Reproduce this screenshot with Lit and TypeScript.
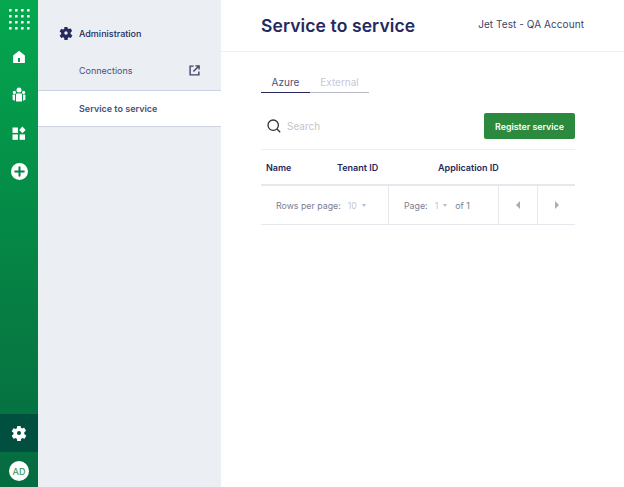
import { LitElement, css, html, svg } from "lit";
import { customElement } from "lit/decorators.js";

const gearPath =
    "M19.4 13.2c.05-.4.08-.8.08-1.2s-.03-.8-.08-1.2l2.3-1.8a.6.6 0 0 0 .14-.76l-2.2-3.8a.6.6 0 0 0-.72-.26l-2.7 1.1a8 8 0 0 0-1.9-1.1l-.42-2.86A.56.56 0 0 0 13.7 1.6H9.3a.56.56 0 0 0-.56.48l-.4 2.86a8 8 0 0 0-1.9 1.1l-2.72-1.1a.56.56 0 0 0-.7.26l-2.2 3.8a.56.56 0 0 0 .14.76l2.3 1.8a9 9 0 0 0 0 2.4l-2.3 1.8a.6.6 0 0 0-.14.76l2.2 3.8c.14.24.44.34.7.26l2.72-1.1c.58.44 1.22.82 1.9 1.1l.4 2.86c.06.28.28.48.56.48h4.4c.28 0 .5-.2.56-.48l.42-2.86c.68-.28 1.3-.66 1.9-1.1l2.7 1.1c.26.08.58 0 .72-.26l2.2-3.8a.6.6 0 0 0-.14-.76l-2.3-1.8zM11.5 15a3 3 0 1 1 0-6 3 3 0 0 1 0 6z";

const gear = (size: number, fill: string) => html`
    <svg width=${size} height=${size} viewBox="-0.5 0 24 24">
        <path fill=${fill} fill-rule="evenodd" d=${gearPath}></path>
    </svg>
`;

const gridDots = () => {
    const dots = [];
    for (let row = 0; row < 4; row++) {
        for (let col = 0; col < 4; col++) {
            dots.push(svg`<rect x=${col * 6} y=${row * 6} width="2.6" height="2.6" rx="0.6" fill="#fff"></rect>`);
        }
    }
    return html`<svg width="21" height="21" viewBox="0 0 21 21">${dots}</svg>`;
};

@customElement("app-root")
export class AppRoot extends LitElement {
    static override styles = css`
        :host {
            display: flex;
            width: 624px;
            height: 487px;
            overflow: hidden;
            background: #fff;
            font-family: Inter, "Liberation Sans", sans-serif;
            color: #26295e;
        }

        .rail {
            width: 38px;
            flex: none;
            display: flex;
            flex-direction: column;
            align-items: center;
            background: linear-gradient(180deg, #05a84f 0%, #049048 35%, #067a42 70%, #056b41 100%);
        }

        .rail-top {
            flex: 1;
            display: flex;
            flex-direction: column;
            align-items: center;
            padding-top: 10px;
        }

        .rail-icon {
            width: 38px;
            height: 38px;
            display: flex;
            align-items: center;
            justify-content: center;
        }

        .rail-icon.first {
            height: 18px;
            margin-bottom: 10px;
        }

        .rail-settings {
            width: 38px;
            height: 38px;
            display: flex;
            align-items: center;
            justify-content: center;
            background: #014f3e;
        }

        .rail-avatar {
            height: 35px;
            box-sizing: border-box;
            padding-top: 3px;
            display: flex;
            align-items: center;
            justify-content: center;
        }

        .avatar {
            width: 20px;
            height: 20px;
            border-radius: 50%;
            background: #fff;
            color: #3f9a5c;
            font-size: 9px;
            font-weight: 500;
            display: flex;
            align-items: center;
            justify-content: center;
        }

        .side {
            width: 183px;
            flex: none;
            background: #ebeef2;
            padding-top: 14px;
            box-sizing: border-box;
        }

        .side-head {
            height: 38px;
            display: flex;
            align-items: center;
            gap: 6px;
            padding-left: 21px;
            font-size: 9px;
            font-weight: 500;
        }

        .side-link {
            height: 38px;
            box-sizing: border-box;
            padding: 0 21px 2px 41px;
            display: flex;
            align-items: center;
            justify-content: space-between;
            font-size: 9px;
            color: #4c4f78;
        }

        .side-active {
            height: 37px;
            box-sizing: border-box;
            display: flex;
            align-items: center;
            padding-left: 41px;
            background: #fff;
            border-top: 1px solid #cdd3e2;
            border-bottom: 1px solid #cdd3e2;
            font-size: 9px;
            font-weight: 600;
            color: #4c4f78;
        }

        .main {
            flex: 1;
            min-width: 0;
        }

        .header {
            height: 52px;
            box-sizing: border-box;
            display: flex;
            align-items: center;
            justify-content: space-between;
            padding: 0 40px;
            border-bottom: 1px solid #eeeff2;
        }

        .title {
            font-size: 17.5px;
            font-weight: 600;
            letter-spacing: 0.1px;
        }

        .account {
            padding-bottom: 4px;
            font-size: 10px;
            letter-spacing: 0.07px;
            color: #3f4268;
        }

        .content {
            width: 314px;
            margin-left: 40px;
            padding-top: 21px;
        }

        .tabs {
            display: flex;
            width: 108px;
        }

        .tab {
            height: 20px;
            box-sizing: border-box;
            font-size: 10px;
            text-align: center;
            border-bottom: 1px solid #b8bac6;
            color: #c6c9d9;
            line-height: 18px;
        }

        .tab.azure {
            width: 49px;
            color: #4c4f78;
            border-bottom: 1px solid #26295e;
        }

        .tab.external {
            width: 59px;
        }

        .toolbar {
            margin-top: 20px;
            padding-bottom: 10px;
            display: flex;
            align-items: center;
            justify-content: space-between;
            border-bottom: 1px solid #eeeff2;
        }

        .search {
            display: flex;
            align-items: center;
            gap: 6px;
            padding-left: 6px;
            font-size: 10px;
            color: #c4c5ca;
        }

        .register {
            width: 91px;
            height: 26px;
            display: flex;
            align-items: center;
            justify-content: center;
            background: #2b8a3e;
            border-radius: 2px;
            color: #fff;
            font-size: 8.8px;
            font-weight: 600;
        }

        .thead {
            height: 36px;
            box-sizing: border-box;
            display: grid;
            grid-template-columns: 71px 101px 1fr;
            align-items: center;
            padding-left: 5px;
            font-size: 9px;
            font-weight: 600;
            border-bottom: 2px solid #e6e8ee;
        }

        .pager {
            height: 39px;
            box-sizing: border-box;
            display: grid;
            grid-template-columns: 128px 110px 39px 1fr;
            border-bottom: 1px solid #e6e8ee;
            font-size: 8.8px;
            color: #7b7d92;
        }

        .cell {
            display: flex;
            align-items: center;
            border-right: 1px solid #e6e8ee;
        }

        .cell:last-child {
            border-right: none;
        }

        .rows {
            padding-left: 15px;
        }

        .pages {
            padding-left: 15px;
        }

        .arrow {
            justify-content: center;
        }

        .val {
            color: #c4c6d2;
            margin-left: 7px;
        }

        .caret {
            width: 0;
            height: 0;
            border-left: 2px solid transparent;
            border-right: 2px solid transparent;
            border-top: 3px solid #b9bbc8;
            margin-left: 5px;
        }

        .of {
            margin-left: 8px;
        }

        .tri-left {
            width: 0;
            height: 0;
            border-top: 4px solid transparent;
            border-bottom: 4px solid transparent;
            border-right: 4px solid #a9abb8;
        }

        .tri-right {
            width: 0;
            height: 0;
            border-top: 4px solid transparent;
            border-bottom: 4px solid transparent;
            border-left: 4px solid #a9abb8;
        }
    `;

    override render() {
        return html`
            <div class="rail">
                <div class="rail-top">
                    <div class="rail-icon first">${gridDots()}</div>
                    <div class="rail-icon">
                        <svg width="14" height="14" viewBox="0 0 14 14">
                            <path
                                fill="#fff"
                                fill-rule="evenodd"
                                d="M7 .8 1.4 5.2c-.2.15-.3.4-.3.6V12.4c0 .4.3.6.6.6h10.6c.3 0 .6-.2.6-.6V5.8c0-.2-.1-.45-.3-.6L7 .8zM6 12V8.2c0-.2.1-.3.3-.3h1.4c.2 0 .3.1.3.3V12H6z"
                            ></path>
                        </svg>
                    </div>
                    <div class="rail-icon">
                        <svg width="16" height="16" viewBox="0 0 16 16" fill="#fff">
                            <circle cx="8" cy="3" r="2.5"></circle>
                            <circle cx="3.4" cy="5.4" r="1.6"></circle>
                            <circle cx="12.6" cy="5.4" r="1.6"></circle>
                            <path d="M5 7.6c0-.6.5-1.1 1.1-1.1h3.8c.6 0 1.1.5 1.1 1.1V14.5H5V7.6z"></path>
                            <path d="M1.6 8.2c0-.4.3-.8.8-.8h1.6v6.4L1.6 12.8V8.2z"></path>
                            <path d="M14.4 8.2c0-.4-.3-.8-.8-.8H12v6.4l2.4-1V8.2z"></path>
                        </svg>
                    </div>
                    <div class="rail-icon">
                        <svg width="14" height="14" viewBox="0 0 14 14" fill="#fff">
                            <rect x="0.5" y="1.5" width="5.4" height="5.4"></rect>
                            <rect x="0.5" y="8.4" width="5.4" height="5.4"></rect>
                            <rect x="7.6" y="8.4" width="5.4" height="5.4"></rect>
                            <path d="M10.4 0.6 13.6 3.9 10.4 7.2 7.2 3.9z"></path>
                        </svg>
                    </div>
                    <div class="rail-icon">
                        <svg width="17" height="17" viewBox="0 0 17 17">
                            <circle cx="8.5" cy="8.5" r="8.5" fill="#fff"></circle>
                            <path d="M8.5 4.2v8.6M4.2 8.5h8.6" stroke="#067f45" stroke-width="2" stroke-linecap="round"></path>
                        </svg>
                    </div>
                </div>
                <div class="rail-settings">${gear(16, "#fff")}</div>
                <div class="rail-avatar"><div class="avatar">AD</div></div>
            </div>

            <div class="side">
                <div class="side-head">${gear(14, "#26295e")}<span>Administration</span></div>
                <div class="side-link">
                    <span>Connections</span>
                    <svg width="11" height="11" viewBox="0 0 12 12" fill="none" stroke="#3f4268" stroke-width="1.5">
                        <path d="M5 1.2H1.2v9.6h9.6V7"></path>
                        <path d="M4.8 7.2 10.6 1.4M7 1h4v4"></path>
                    </svg>
                </div>
                <div class="side-active">Service to service</div>
            </div>

            <div class="main">
                <div class="header">
                    <div class="title">Service to service</div>
                    <div class="account">Jet Test - QA Account</div>
                </div>
                <div class="content">
                    <div class="tabs">
                        <div class="tab azure">Azure</div>
                        <div class="tab external">External</div>
                    </div>
                    <div class="toolbar">
                        <div class="search">
                            <svg width="14" height="14" viewBox="0 0 14 14" fill="none" stroke="#2f3136" stroke-width="1.3">
                                <circle cx="6.2" cy="6.2" r="5.2"></circle>
                                <path d="M10 10l3.2 3.2"></path>
                            </svg>
                            <span>Search</span>
                        </div>
                        <div class="register">Register service</div>
                    </div>
                    <div class="thead">
                        <span>Name</span>
                        <span>Tenant ID</span>
                        <span>Application ID</span>
                    </div>
                    <div class="pager">
                        <div class="cell rows">
                            Rows per page:<span class="val">10</span><span class="caret"></span>
                        </div>
                        <div class="cell pages">
                            Page:<span class="val">1</span><span class="caret"></span><span class="of">of 1</span>
                        </div>
                        <div class="cell arrow"><span class="tri-left"></span></div>
                        <div class="cell arrow"><span class="tri-right"></span></div>
                    </div>
                </div>
            </div>
        `;
    }
}
